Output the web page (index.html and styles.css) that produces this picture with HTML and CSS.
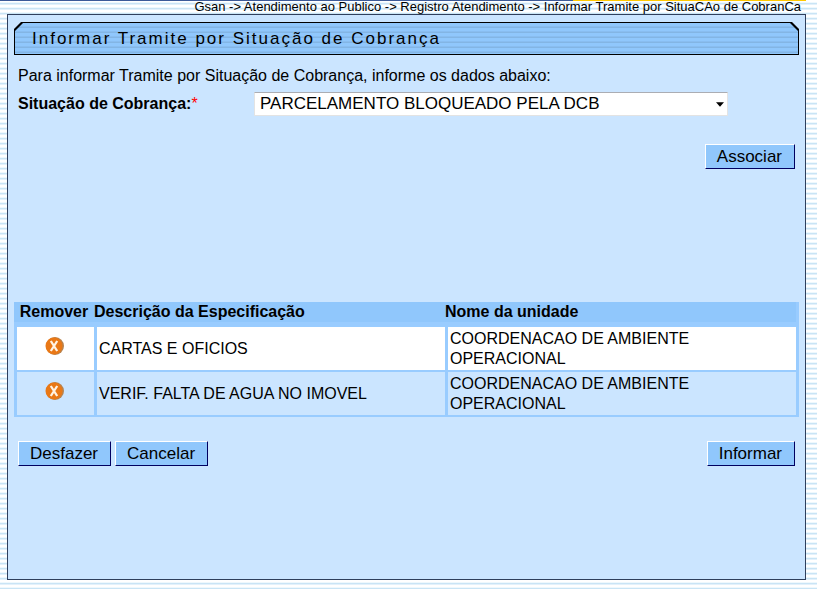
FILE: index.html
```html
<!DOCTYPE html>
<html lang="pt-BR">
<head>
<meta charset="utf-8">
<title>Informar Tramite por Situação de Cobrança</title>
<link rel="stylesheet" href="styles.css">
</head>
<body>
<nav class="crumbs">Gsan -&gt; Atendimento ao Publico -&gt; Registro Atendimento -&gt; Informar Tramite por SituaCAo de CobranCa</nav>
<main class="panel">
  <h1 class="title"><span class="title-text">Informar Tramite por Situação de Cobrança</span></h1>
  <form class="form">
    <p class="intro">Para informar Tramite por Situação de Cobrança, informe os dados abaixo:</p>
    <div class="field">
      <label class="label" for="situacao">Situação de Cobrança:<span class="required">*</span></label>
      <div class="select-wrap">
        <select class="select" id="situacao"><option>PARCELAMENTO BLOQUEADO PELA DCB</option></select>
        <svg class="arrow" viewBox="0 0 7 4" aria-hidden="true"><path d="M0 0h7L3.500 4z"/></svg>
      </div>
    </div>
    <div class="actions associate"><button class="btn" type="button">Associar</button></div>
    <table class="grid">
      <colgroup><col class="col-remove"><col class="col-desc"><col></colgroup>
      <thead><tr><th class="center">Remover</th><th>Descrição da Especificação</th><th>Nome da unidade</th></tr></thead>
      <tbody>
        <tr class="odd">
          <td class="center"><button class="remove" type="button" aria-label="Remover"><svg class="icon" viewBox="0 0 19 18"><circle cx="10" cy="9" r="9" fill="#b8834f"/><circle cx="9" cy="9" r="8.500" fill="#e97816"/><path d="M5.800 4l6.400 10M12.200 4l-6.400 10" stroke="#fff3e4" stroke-width="2.300"/></svg></button></td>
          <td>CARTAS E OFICIOS</td><td>COORDENACAO DE AMBIENTE<br>OPERACIONAL</td>
        </tr>
        <tr class="even">
          <td class="center"><button class="remove" type="button" aria-label="Remover"><svg class="icon" viewBox="0 0 19 18"><circle cx="10" cy="9" r="9" fill="#b8834f"/><circle cx="9" cy="9" r="8.500" fill="#e97816"/><path d="M5.800 4l6.400 10M12.200 4l-6.400 10" stroke="#fff3e4" stroke-width="2.300"/></svg></button></td>
          <td>VERIF. FALTA DE AGUA NO IMOVEL</td><td>COORDENACAO DE AMBIENTE<br>OPERACIONAL</td>
        </tr>
      </tbody>
    </table>
    <div class="actions">
      <div class="group"><button class="btn" type="button">Desfazer</button><button class="btn" type="button">Cancelar</button></div>
      <button class="btn" type="button">Informar</button>
    </div>
  </form>
</main>
</body>
</html>
```
FILE: styles.css
```css
* { box-sizing: border-box; }
body {
  margin: 0;
  min-height: 100vh;
  padding: 0 11px 9px 7px;
  display: flex;
  flex-direction: column;
  font-family: "Liberation Sans", Arial, sans-serif;
  font-size: 16px;
  line-height: 20px;
  color: #000;
  background: repeating-linear-gradient(#fff 0 2px, #eef8fd 2px 3px, #c9e4f5 3px 4px, #e3f1fb 4px 5px);
}
.crumbs {
  height: 14px;
  margin-left: -7px;
  padding-right: 5px;
  border-top: 1px solid;
  border-image: linear-gradient(90deg, #3c5a98 71%, #ffc800 71%) 1;
  font-size: 13px;
  line-height: 12px;
  text-align: right;
  white-space: nowrap;
}
.panel {
  flex: 1;
  padding: 7px 6px;
  border: 1px solid #2f3f5c;
  background: #cbe5ff;
}
.title {
  height: 33px;
  margin: 0;
  padding: 1px;
  background: #000;
  clip-path: polygon(7px 0, calc(100% - 7px) 0, 100% 7px, 100% 100%, 0 100%, 0 7px);
  font-size: 17px;
  font-weight: normal;
  letter-spacing: 2px;
}
.title-text {
  display: block;
  height: 31px;
  padding-left: 17px;
  line-height: 31px;
  background: repeating-linear-gradient(#90c7fc 0 3px, #89bdf0 3px 4px, #83b5e4 4px 5px);
  clip-path: polygon(8px 0, calc(100% - 8px) 0, 100% 8px, 100% 100%, 0 100%, 0 8px);
}
.intro { margin: 11px 4px 6px; }
.field { display: flex; padding: 0 4px; }
.label { width: 236px; line-height: 24px; font-weight: bold; }
.required { color: #f00; font-weight: normal; }
.select-wrap { position: relative; width: 61%; }
.select {
  appearance: none;
  display: block;
  width: 100%;
  height: 24px;
  padding: 0 5px;
  border: 1px solid #e3e3e3;
  border-top-color: #abadb3;
  border-radius: 1px;
  background: #fff;
  font: inherit;
  font-size: 17px;
  color: #000;
}
.arrow { position: absolute; right: 4px; top: 10px; width: 8px; height: 5px; }
.actions { display: flex; justify-content: space-between; padding: 0 4px; }
.associate { justify-content: flex-end; margin: 28px 0 133px; }
.group { display: flex; gap: 4px; }
.btn {
  height: 25px;
  padding: 1px 12px 0 11px;
  border: 1px solid #000060;
  border-top-color: #fff;
  border-left-color: #fff;
  background: #90c7fc;
  font: inherit;
  font-size: 17px;
  color: #000;
}
.grid {
  width: 100%;
  margin-bottom: 24px;
  border-collapse: separate;
  border-spacing: 0;
  table-layout: fixed;
  border: solid #99ccff;
  border-width: 0 3px 2px 0;
  background: linear-gradient(#90c7fc 20px, #99ccff 20px);
}
.col-remove { width: 80px; }
.col-desc { width: 351px; }
.grid th { height: 23px; padding: 0 0 4px; text-align: left; line-height: 19px; }
.grid td { height: 45px; padding: 1px 2px; border: solid #99ccff; border-width: 2px 0 0 3px; }
.grid .center { padding-left: 0; text-align: center; }
.odd td { background: #fff; }
.even td { background: #cbe5ff; }
.remove { display: block; margin: 0 auto; padding: 0 0 5px; border: 0; background: none; }
.icon { display: block; width: 19px; height: 18px; }
```
